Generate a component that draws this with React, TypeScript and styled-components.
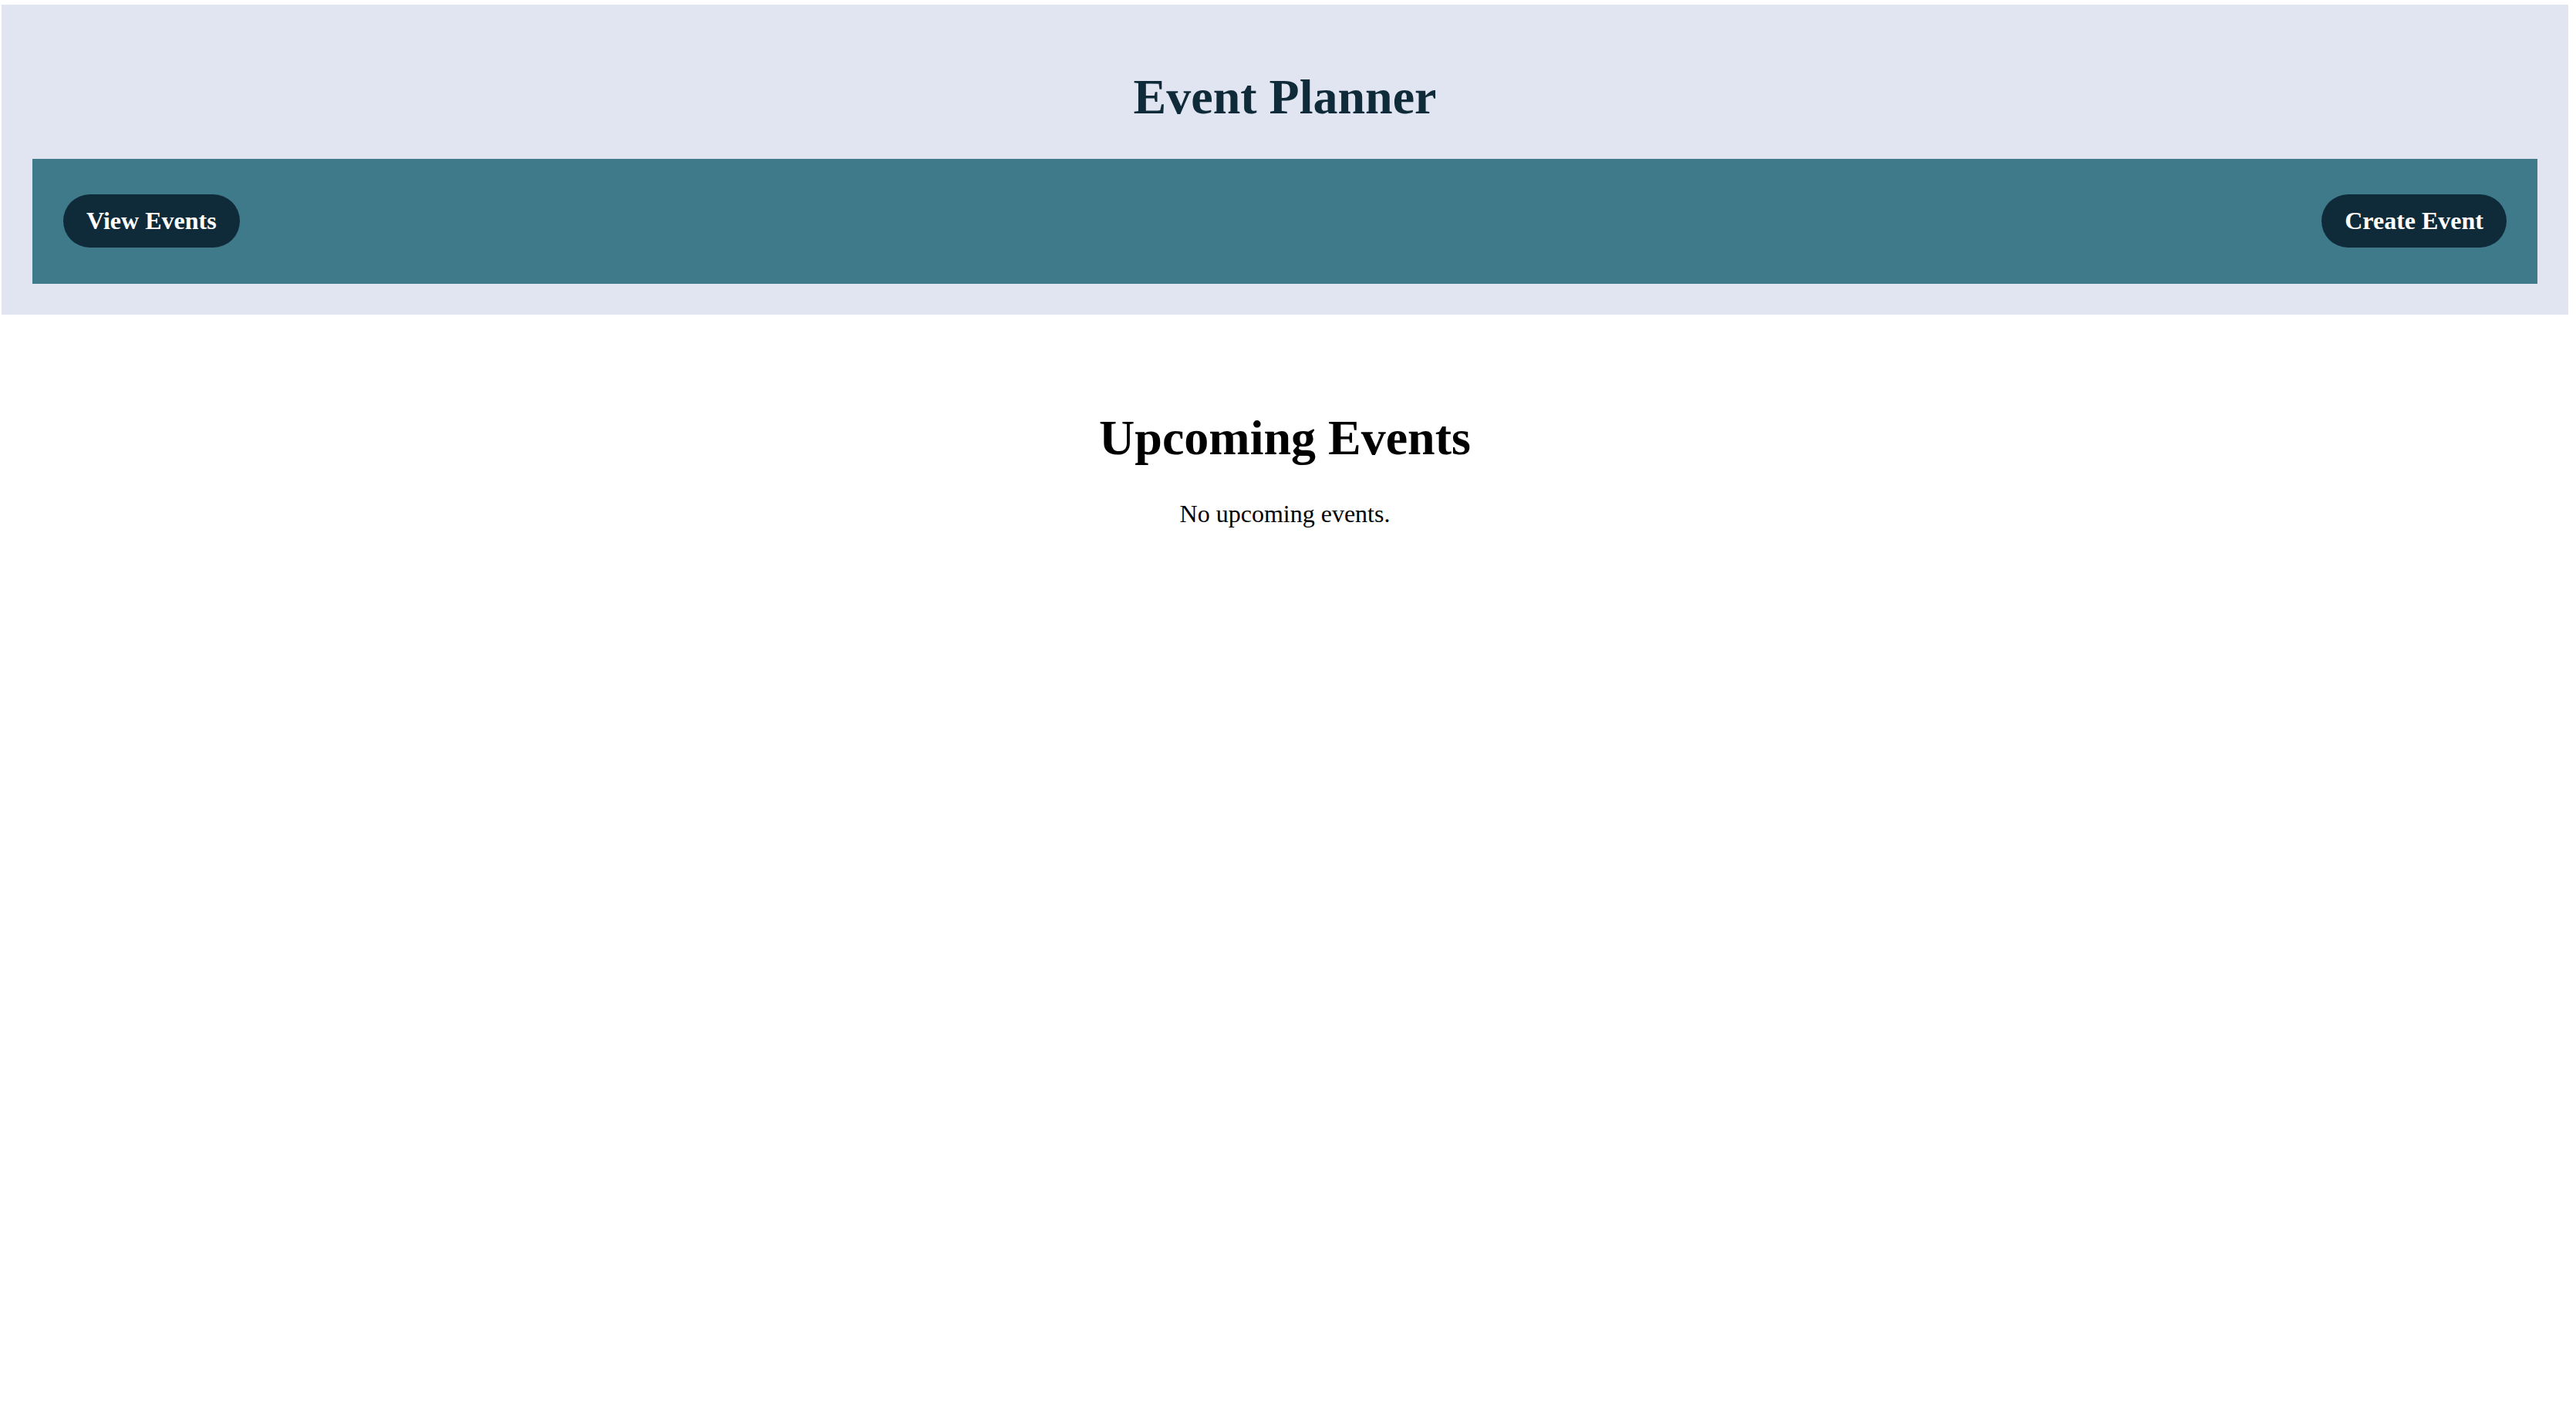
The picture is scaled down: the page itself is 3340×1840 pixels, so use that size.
import styled, { createGlobalStyle } from 'styled-components';

const GlobalStyle = createGlobalStyle`
  html, body {
    margin: 0;
    padding: 0;
    background: #ffffff;
  }
  body {
    font-family: "Liberation Serif", "Times New Roman", serif;
    color: #000000;
  }
`;

const Page = styled.div`
  padding: 6px 10px 0 2px;
`;

const Header = styled.header`
  background: #e1e4f1;
  padding: 0 40px 40px;
  display: flex;
  flex-direction: column;
`;

const Title = styled.h1`
  margin: 84px 0 44px;
  font-size: 64px;
  line-height: 72px;
  font-weight: 700;
  text-align: center;
  color: #0f2b3a;
`;

const NavBar = styled.nav`
  background: #3e7a8a;
  padding: 46px 40px 47px;
  display: flex;
  justify-content: space-between;
  align-items: center;
`;

const NavButton = styled.button`
  background: #0f2b3a;
  color: #ffffff;
  border: none;
  border-radius: 999px;
  height: 69px;
  padding: 0 30px;
  font-family: "Liberation Serif", "Times New Roman", serif;
  font-size: 32px;
  font-weight: 700;
  cursor: pointer;
`;

const Main = styled.main`
  display: flex;
  flex-direction: column;
  align-items: center;
  padding: 0 40px;
`;

const SectionTitle = styled.h2`
  margin: 124px 0 44px;
  font-size: 64px;
  line-height: 72px;
  font-weight: 700;
`;

const EmptyText = styled.p`
  margin: 0;
  font-size: 32px;
  line-height: 37px;
`;

export default function App() {
  return (
    <>
      <GlobalStyle />
      <Page>
        <Header>
          <Title>Event Planner</Title>
          <NavBar>
            <NavButton>View Events</NavButton>
            <NavButton>Create Event</NavButton>
          </NavBar>
        </Header>
        <Main>
          <SectionTitle>Upcoming Events</SectionTitle>
          <EmptyText>No upcoming events.</EmptyText>
        </Main>
      </Page>
    </>
  );
}
